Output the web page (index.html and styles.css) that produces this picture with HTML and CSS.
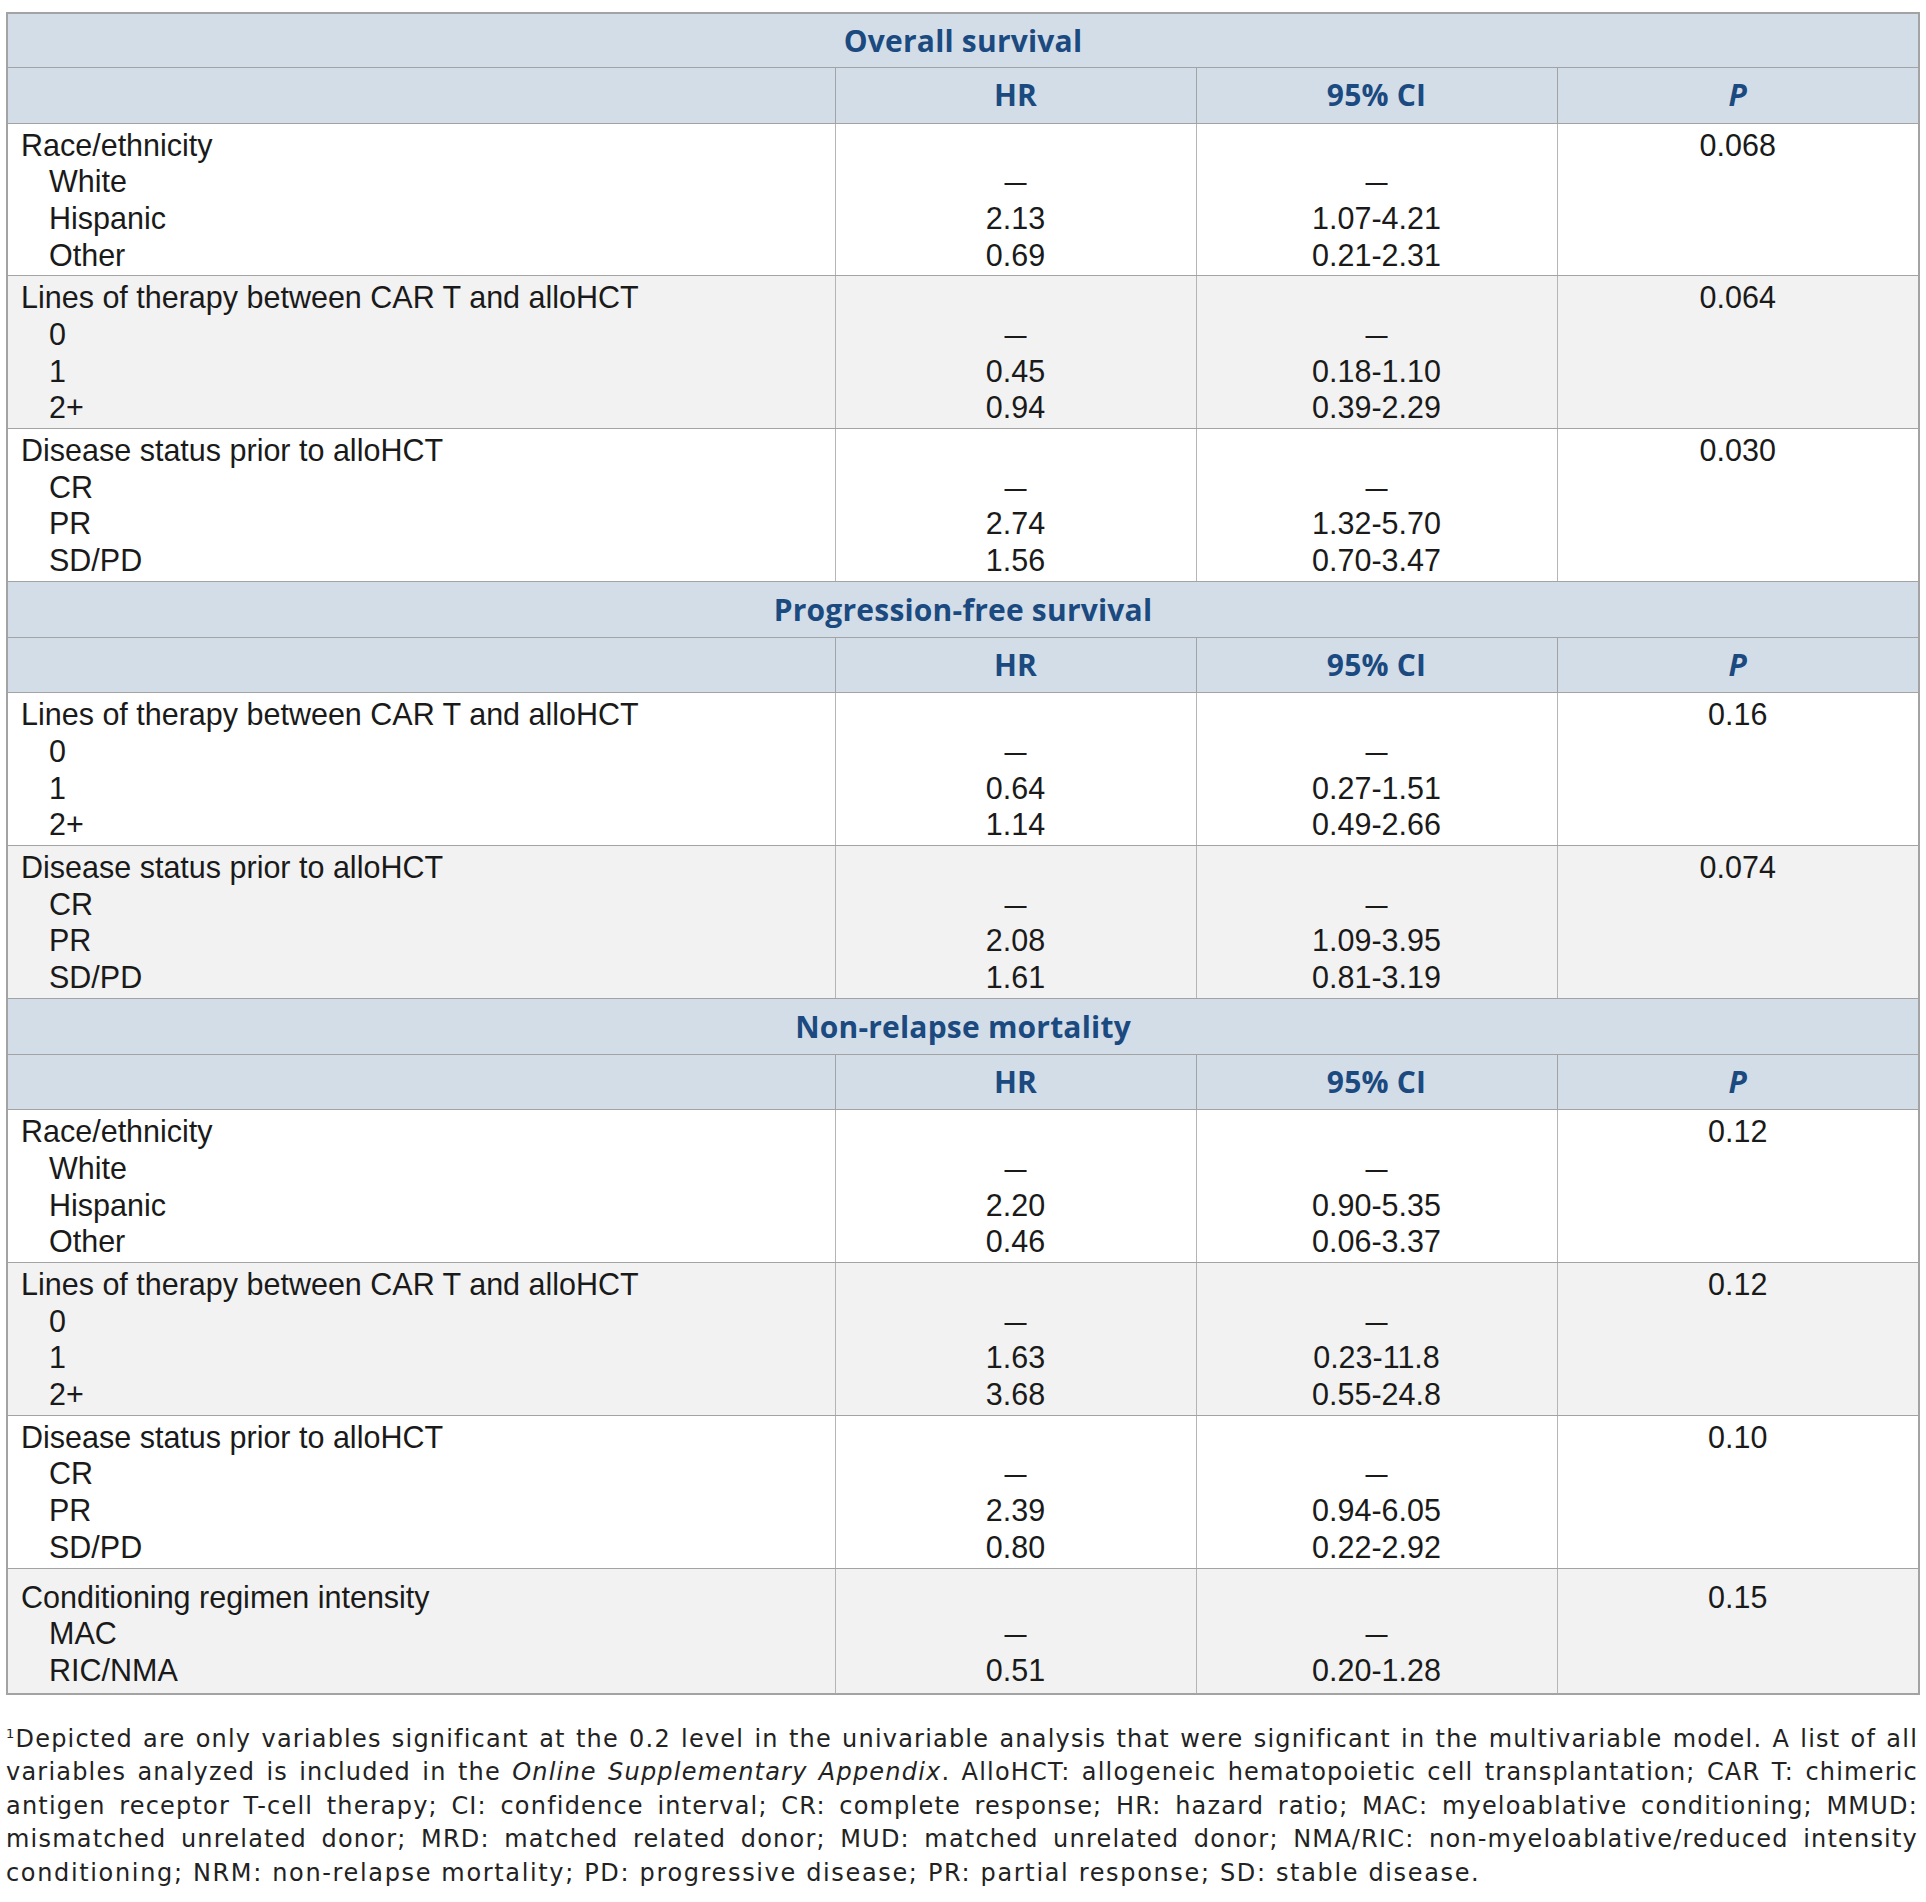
FILE: index.html
```html
<!DOCTYPE html>
<html>
<head>
<meta charset="utf-8">
<link rel="stylesheet" href="styles.css">
</head>
<body>
<div class="page">
<table class="tbl">
  <colgroup><col class="c1"><col class="c2"><col class="c3"><col class="c4"></colgroup>
  <tbody>
    <tr class="sec first"><th colspan="4">Overall survival</th></tr>
    <tr class="hdr"><th></th><th>HR</th><th>95% CI</th><th><i>P</i></th></tr>
    <tr class="grp">
      <td><div class="l">Race/ethnicity</div><div class="l ind">White</div><div class="l ind">Hispanic</div><div class="l ind">Other</div></td>
      <td class="n"><div class="l">&nbsp;</div><div class="l"><span class="d">–</span></div><div class="l">2.13</div><div class="l">0.69</div></td>
      <td class="n"><div class="l">&nbsp;</div><div class="l"><span class="d">–</span></div><div class="l">1.07-4.21</div><div class="l">0.21-2.31</div></td>
      <td class="n"><div class="l">0.068</div></td>
    </tr>
    <tr class="grp alt">
      <td><div class="l">Lines of therapy between CAR T and alloHCT</div><div class="l ind">0</div><div class="l ind">1</div><div class="l ind">2+</div></td>
      <td class="n"><div class="l">&nbsp;</div><div class="l"><span class="d">–</span></div><div class="l">0.45</div><div class="l">0.94</div></td>
      <td class="n"><div class="l">&nbsp;</div><div class="l"><span class="d">–</span></div><div class="l">0.18-1.10</div><div class="l">0.39-2.29</div></td>
      <td class="n"><div class="l">0.064</div></td>
    </tr>
    <tr class="grp">
      <td><div class="l">Disease status prior to alloHCT</div><div class="l ind">CR</div><div class="l ind">PR</div><div class="l ind">SD/PD</div></td>
      <td class="n"><div class="l">&nbsp;</div><div class="l"><span class="d">–</span></div><div class="l">2.74</div><div class="l">1.56</div></td>
      <td class="n"><div class="l">&nbsp;</div><div class="l"><span class="d">–</span></div><div class="l">1.32-5.70</div><div class="l">0.70-3.47</div></td>
      <td class="n"><div class="l">0.030</div></td>
    </tr>

    <tr class="sec"><th colspan="4">Progression-free survival</th></tr>
    <tr class="hdr"><th></th><th>HR</th><th>95% CI</th><th><i>P</i></th></tr>
    <tr class="grp">
      <td><div class="l">Lines of therapy between CAR T and alloHCT</div><div class="l ind">0</div><div class="l ind">1</div><div class="l ind">2+</div></td>
      <td class="n"><div class="l">&nbsp;</div><div class="l"><span class="d">–</span></div><div class="l">0.64</div><div class="l">1.14</div></td>
      <td class="n"><div class="l">&nbsp;</div><div class="l"><span class="d">–</span></div><div class="l">0.27-1.51</div><div class="l">0.49-2.66</div></td>
      <td class="n"><div class="l">0.16</div></td>
    </tr>
    <tr class="grp alt">
      <td><div class="l">Disease status prior to alloHCT</div><div class="l ind">CR</div><div class="l ind">PR</div><div class="l ind">SD/PD</div></td>
      <td class="n"><div class="l">&nbsp;</div><div class="l"><span class="d">–</span></div><div class="l">2.08</div><div class="l">1.61</div></td>
      <td class="n"><div class="l">&nbsp;</div><div class="l"><span class="d">–</span></div><div class="l">1.09-3.95</div><div class="l">0.81-3.19</div></td>
      <td class="n"><div class="l">0.074</div></td>
    </tr>

    <tr class="sec"><th colspan="4">Non-relapse mortality</th></tr>
    <tr class="hdr"><th></th><th>HR</th><th>95% CI</th><th><i>P</i></th></tr>
    <tr class="grp">
      <td><div class="l">Race/ethnicity</div><div class="l ind">White</div><div class="l ind">Hispanic</div><div class="l ind">Other</div></td>
      <td class="n"><div class="l">&nbsp;</div><div class="l"><span class="d">–</span></div><div class="l">2.20</div><div class="l">0.46</div></td>
      <td class="n"><div class="l">&nbsp;</div><div class="l"><span class="d">–</span></div><div class="l">0.90-5.35</div><div class="l">0.06-3.37</div></td>
      <td class="n"><div class="l">0.12</div></td>
    </tr>
    <tr class="grp alt">
      <td><div class="l">Lines of therapy between CAR T and alloHCT</div><div class="l ind">0</div><div class="l ind">1</div><div class="l ind">2+</div></td>
      <td class="n"><div class="l">&nbsp;</div><div class="l"><span class="d">–</span></div><div class="l">1.63</div><div class="l">3.68</div></td>
      <td class="n"><div class="l">&nbsp;</div><div class="l"><span class="d">–</span></div><div class="l">0.23-11.8</div><div class="l">0.55-24.8</div></td>
      <td class="n"><div class="l">0.12</div></td>
    </tr>
    <tr class="grp">
      <td><div class="l">Disease status prior to alloHCT</div><div class="l ind">CR</div><div class="l ind">PR</div><div class="l ind">SD/PD</div></td>
      <td class="n"><div class="l">&nbsp;</div><div class="l"><span class="d">–</span></div><div class="l">2.39</div><div class="l">0.80</div></td>
      <td class="n"><div class="l">&nbsp;</div><div class="l"><span class="d">–</span></div><div class="l">0.94-6.05</div><div class="l">0.22-2.92</div></td>
      <td class="n"><div class="l">0.10</div></td>
    </tr>
    <tr class="grp alt last">
      <td><div class="l">Conditioning regimen intensity</div><div class="l ind">MAC</div><div class="l ind">RIC/NMA</div></td>
      <td class="n"><div class="l">&nbsp;</div><div class="l"><span class="d">–</span></div><div class="l">0.51</div></td>
      <td class="n"><div class="l">&nbsp;</div><div class="l"><span class="d">–</span></div><div class="l">0.20-1.28</div></td>
      <td class="n"><div class="l">0.15</div></td>
    </tr>
  </tbody>
</table>
<div class="foot">
  <span class="fl"><sup>1</sup>Depicted are only variables significant at the 0.2 level in the univariable analysis that were significant in the multivariable model. A list of all</span>
  <span class="fl">variables analyzed is included in the <i>Online Supplementary Appendix</i>. AlloHCT: allogeneic hematopoietic cell transplantation; CAR T: chimeric</span>
  <span class="fl">antigen receptor T-cell therapy; CI: confidence interval; CR: complete response; HR: hazard ratio; MAC: myeloablative conditioning; MMUD:</span>
  <span class="fl">mismatched unrelated donor; MRD: matched related donor; MUD: matched unrelated donor; NMA/RIC: non-myeloablative/reduced intensity</span>
  <span class="fl end">conditioning; NRM: non-relapse mortality; PD: progressive disease; PR: partial response; SD: stable disease.</span>
</div>
</div>
</body>
</html>
```

FILE: styles.css
```css
html, body {
  margin: 0;
  padding: 0;
  background: #ffffff;
}

.page {
  padding: 12px 8px 0 6px;
}

.tbl {
  width: 1912px;
  border-collapse: collapse;
  table-layout: fixed;
  border: 2px solid #a3a3a3;
  font-family: "Liberation Sans", Arial, sans-serif;
  font-size: 30.5px;
  color: #1a1a1a;
}

.c1 { width: 828px; }
.c2 { width: 361px; }
.c3 { width: 361px; }
.c4 { width: 362px; }

.sec th,
.hdr th {
  background: #d3dde7;
  color: #1b4a80;
  font-family: "Open Sans", "Liberation Sans", sans-serif;
  font-weight: 700;
  font-size: 30px;
  letter-spacing: 0.2px;
  text-align: center;
  padding: 0;
}

.sec th {
  height: 55px;
  line-height: 55px;
  border-bottom: 1px solid #a3a3a3;
}

.sec.first th {
  height: 53px;
  line-height: 53px;
}

.hdr th {
  height: 54.5px;
  line-height: 54px;
  border-bottom: 1px solid #a3a3a3;
  border-left: 1px solid #a3a3a3;
}

.hdr th:first-child {
  border-left: 2px solid #a3a3a3;
}

.grp td {
  vertical-align: top;
  padding: 3px 0 2px 0;
  border-bottom: 1px solid #a3a3a3;
  border-left: 1px solid #b5b5b5;
}

.grp td:first-child {
  padding-left: 13px;
  border-left: 2px solid #a3a3a3;
}

.grp.alt td {
  background: #f2f2f2;
}

.grp.last td {
  padding-top: 10px;
  padding-bottom: 4px;
  border-bottom: 2px solid #a3a3a3;
}

.l {
  line-height: 36.7px;
  height: 36.7px;
  white-space: nowrap;
}

.ind {
  padding-left: 28px;
}

.n {
  text-align: center;
}

.d {
  display: inline-block;
  transform: scaleX(1.3);
}

.foot {
  margin-top: 28px;
  font-family: "DejaVu Sans", "Open Sans", sans-serif;
  font-size: 24px;
  letter-spacing: 1.2px;
  word-spacing: -1px;
  line-height: 33.5px;
  color: #222222;
  width: 1912px;
}

.fl {
  display: block;
  text-align: justify;
  text-align-last: justify;
  white-space: nowrap;
}

.fl.end {
  text-align-last: left;
  letter-spacing: 1.65px;
  word-spacing: 0;
}

.foot sup {
  font-size: 13px;
  line-height: 0;
  vertical-align: 9px;
}
```
